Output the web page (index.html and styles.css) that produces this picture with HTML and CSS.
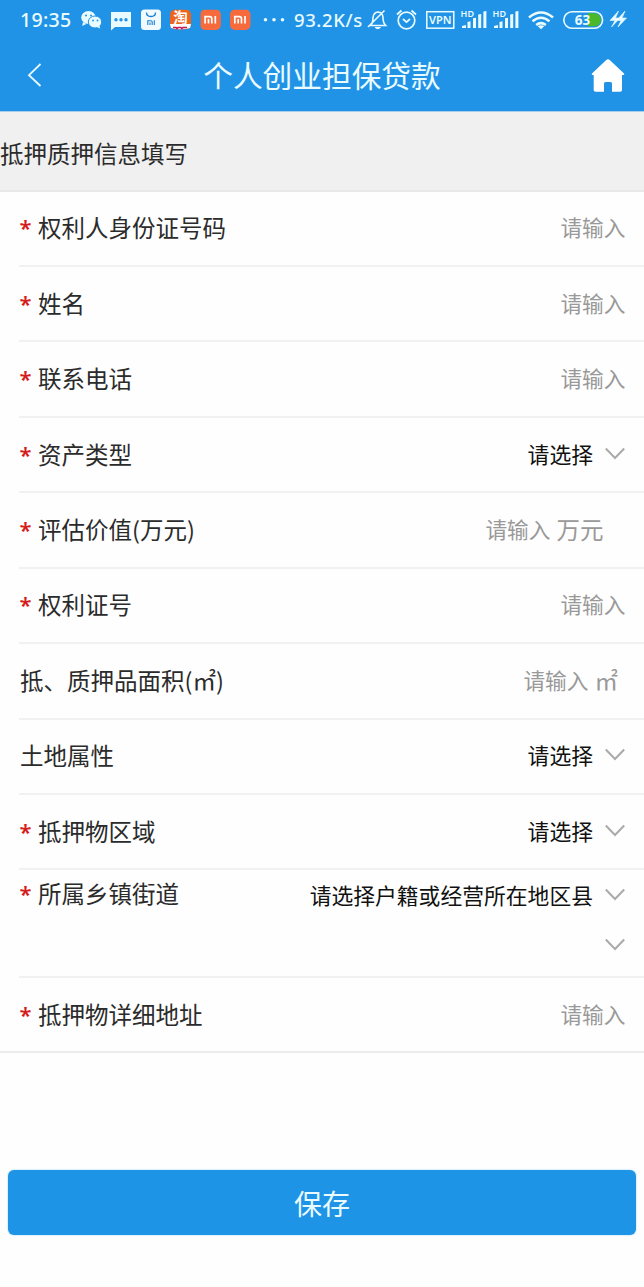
FILE: index.html
```html
<!DOCTYPE html>
<html lang="zh-CN">
<head>
<meta charset="utf-8">
<title>个人创业担保贷款</title>
<link rel="stylesheet" href="styles.css">
</head>
<body>
<svg class="defs" width="0" height="0">
  <defs>
    <symbol id="chevron" viewBox="0 0 22 14"><path d="M1.8 1.5 L11 11 L20.2 1.5" fill="none" stroke="#aaa" stroke-width="2"/></symbol>
    <symbol id="mi" viewBox="0 0 21 21"><rect width="20.5" height="20.5" rx="5" fill="#f76a3c"/><path d="M4.8 14V7.2H9.3Q11.5 7.2 11.5 9.4V14M8.2 9.6V14M15 6.6V14" fill="none" stroke="#fff" stroke-width="1.7"/></symbol>
    <symbol id="signal" viewBox="0 0 32 40"><path d="M4 28v-2l4-1v3zM9.5 28v-6l3-.8V28zM15 28V18.3l3-.6V28zM20.2 28V14.5l3-.6V28zM25.4 28V11.6l3-.6v17z" fill="#e9fbff"/><text x="2.6" y="17" class="hd">HD</text></symbol>
  </defs>
</svg>
<header class="top">
  <div class="status">
    <span class="clock">19:35</span>
    <svg width="27" height="40" viewBox="78 0 27 40"><ellipse cx="88.5" cy="17.5" rx="7.3" ry="6.5" fill="#e9fbff"/><path d="M83 22l-.8 4 4-2z" fill="#e9fbff"/><ellipse cx="95" cy="22" rx="6.7" ry="6" fill="#e9fbff" stroke="#2193e7" stroke-width="1"/><path d="M97 27l3 1.5-.5-3z" fill="#e9fbff"/><g fill="#2193e7"><circle cx="86" cy="15.5" r="1"/><circle cx="91" cy="15.5" r="1"/><circle cx="93" cy="20.5" r=".9"/><circle cx="97.5" cy="20.5" r=".9"/></g></svg>
    <svg width="31" height="40" viewBox="105 0 31 40"><path d="M111 12h20v15h-16l-4 3.5z" fill="#e9fbff"/><g fill="#2193e7"><circle cx="116" cy="19.7" r="1.7"/><circle cx="121" cy="19.7" r="1.7"/><circle cx="126" cy="19.7" r="1.7"/></g></svg>
    <svg width="30" height="40" viewBox="136 0 30 40"><rect x="141" y="9.5" width="20" height="20.5" rx="3.5" fill="#f1fbff"/><path d="M146.5 12.5q0 4 4.5 4t4.5-4" fill="none" stroke="#1680d4" stroke-width="1.3"/><path d="M147.8 25v-4.3h3q1.4 0 1.4 1.4V25M150 22.5V25M154.3 20.2V25" fill="none" stroke="#1680d4" stroke-width="1.1"/></svg>
    <svg width="30" height="40" viewBox="166 0 30 40"><rect x="170" y="9.7" width="21" height="19.6" rx="5" fill="#ee641d"/><path d="M170 24h21l-1 4q-9 2.7-19 0z" fill="#fff"/><path d="M173 27.5h3l1 1 1-1h3l1 1 1-1h4" fill="none" stroke="#c81852" stroke-width="1.6"/><text x="173.2" y="22.6" class="tao">淘</text></svg>
    <svg width="29" height="40" viewBox="196 0 29 40"><use href="#mi" x="200.3" y="9.5" width="21" height="21"/></svg>
    <svg width="31" height="40" viewBox="225 0 31 40"><use href="#mi" x="230" y="9.5" width="21" height="21"/></svg>
    <svg width="37" height="40" viewBox="256 0 37 40"><g fill="#e9fbff"><circle cx="265.5" cy="19.7" r="1.8"/><circle cx="274" cy="19.7" r="1.8"/><circle cx="282.5" cy="19.7" r="1.8"/></g></svg>
    <span class="speed">93.2K/s</span>
    <svg width="27" height="40" viewBox="365 0 27 40"><path d="M370.5 25.5q2.5-2.5 2.5-8 .6-5 5-5.5 4.7.5 5 5.5 0 5.5 2.700 8zM368 27L384.5 10.5" fill="none" stroke="#e9fbff" stroke-width="1.6"/><path d="M375 27.5h5.5q-2.7 2.5-5.5 0z" fill="#e9fbff" stroke="#e9fbff"/></svg>
    <svg width="31" height="40" viewBox="392 0 31 40"><g fill="none" stroke="#e9fbff" stroke-width="1.7"><circle cx="406.500" cy="20.500" r="8.300"/><path d="M403 19l3.500 3.200 3.500-3.200M397 14.500l4.500-4M416 14.500l-4.500-4"/></g></svg>
    <svg width="35" height="40" viewBox="423 0 35 40"><rect x="426.800" y="11.700" width="27" height="16.500" fill="none" stroke="#e9fbff" stroke-width="1.5"/><text x="429" y="24" class="vpn" textLength="22.500" lengthAdjust="spacingAndGlyphs">VPN</text></svg>
    <svg width="32" height="40"><use href="#signal" width="32" height="40"/></svg>
    <svg width="33" height="40"><use href="#signal" width="32" height="40"/></svg>
    <svg width="36" height="40" viewBox="523 0 36 40"><g fill="none" stroke="#e9fbff" stroke-width="2.500"><path d="M529 17.500q12-10 24 0M532.500 21.300q8.500-7 17 0M536.200 25q4.800-3.800 9.600 0"/></g><path d="M537.800 26.200q3.200-2 6.400 0l-3.200 3z" fill="#e9fbff"/></svg>
    <svg width="48" height="40" viewBox="559 0 48 40"><path d="M588 13.300h6.500a6.500 6.500 0 0 1 0 13H588z" fill="#4bb829"/><rect x="563.800" y="11.700" width="38.800" height="16.600" rx="8.300" fill="none" stroke="#e9fbff" stroke-width="1.600"/><text x="574.7" y="24.800" class="charge">63</text></svg>
    <svg width="37" height="40" viewBox="607 0 37 40"><path d="M618.500 11l-8.500 9.500h5l-3.500 6.500 8.500-9h-4.500zM625 11l-8.500 9.500h4.500l-3 6.500 8.500-9H622z" fill="#e9fbff" stroke="#e9fbff" stroke-width=".6"/></svg>
  </div>
  <div class="nav">
    <svg class="back" width="56" height="60" viewBox="0 0 56 60"><path d="M40.500 24L29 35.200 40.500 46" fill="none" stroke="#e9fbff" stroke-width="1.800"/></svg>
    <h1 class="title">个人创业担保贷款</h1>
    <svg class="home" width="56" height="60" viewBox="588 40 56 60"><path d="M608 59.300q1 0 2 .9l14 13.300q.8 1-.4 1.400H622v15q0 1.800-1.800 1.800H612v-8.200q0-1.500-1.500-1.500h-5q-1.500 0-1.500 1.500v8.200h-8.500q-1.800 0-1.800-1.800v-15H592.400q-1.200-.4-.4-1.400l14-13.300q1-.9 2-.9z" fill="#fff"/></svg>
  </div>
</header>
<h2 class="section">抵押质押信息填写</h2>
<main class="form">
  <div class="row"><span class="label"><i class="req">*</i>权利人身份证号码</span><span class="hint">请输入</span></div>
  <div class="row"><span class="label"><i class="req">*</i>姓名</span><span class="hint">请输入</span></div>
  <div class="row"><span class="label"><i class="req">*</i>联系电话</span><span class="hint">请输入</span></div>
  <div class="row"><span class="label"><i class="req">*</i>资产类型</span><span class="choice">请选择<svg class="chev"><use href="#chevron"/></svg></span></div>
  <div class="row"><span class="label"><i class="req">*</i>评估价值(万元)</span><span class="hint wan">请输入<span class="unit">万元</span></span></div>
  <div class="row"><span class="label"><i class="req">*</i>权利证号</span><span class="hint">请输入</span></div>
  <div class="row"><span class="label">抵、质押品面积(㎡)</span><span class="hint area">请输入<span class="unit">㎡</span></span></div>
  <div class="row"><span class="label">土地属性</span><span class="choice">请选择<svg class="chev"><use href="#chevron"/></svg></span></div>
  <div class="row"><span class="label"><i class="req">*</i>抵押物区域</span><span class="choice">请选择<svg class="chev"><use href="#chevron"/></svg></span></div>
  <div class="row tall"><span class="label"><i class="req">*</i>所属乡镇街道</span><div class="stack"><span class="choice">请选择户籍或经营所在地区县<svg class="chev"><use href="#chevron"/></svg></span><span class="choice"><svg class="chev"><use href="#chevron"/></svg></span></div></div>
  <div class="row last"><span class="label"><i class="req">*</i>抵押物详细地址</span><span class="hint">请输入</span></div>
</main>
<button class="save">保存</button>
</body>
</html>
```
FILE: styles.css
```css
* { box-sizing: border-box; }
body {
  margin: 0;
  width: 644px;
  height: 1287px;
  overflow: hidden;
  background: #fefefe;
  font-family: "Noto Sans CJK SC", sans-serif;
  color: #2b2b2b;
}
.defs { position: absolute; }
.top { height: 112px; background: #2193e7; border-bottom: 1px solid #a9cdea; }
.status { display: flex; height: 40px; color: #e9fbff; }
.status svg { flex: none; display: block; }
.clock, .speed {
  flex: none;
  font: 500 19.5px/40px "Noto Sans", sans-serif;
  white-space: nowrap;
}
.clock { width: 78px; padding-left: 20px; letter-spacing: .3px; }
.speed { width: 72px; padding-left: 1px; font-size: 18.5px; letter-spacing: .6px; }
.hd { font: 600 9px "Noto Sans", sans-serif; fill: #e9fbff; }
.tao { font: 700 14.5px "Noto Sans CJK SC", sans-serif; fill: #fff; }
.vpn { font: 600 11.5px "Noto Sans", sans-serif; fill: #e9fbff; }
.charge { font: 700 13.5px "Noto Sans", sans-serif; fill: #e9fbff; }
.nav { display: flex; justify-content: space-between; height: 60px; }
.title { margin: 5px 0 0; font-size: 29.7px; line-height: 60px; font-weight: 400; color: #e9fbff; }
.section {
  margin: 0;
  height: 79.5px;
  border-bottom: 2px solid #e9e9e9;
  background: #f0f0f0;
  font-size: 23.5px;
  line-height: 82px;
  font-weight: 400;
}
.form { border-bottom: 2px solid #ececec; }
.row {
  display: flex;
  align-items: center;
  justify-content: space-between;
  height: 75.45px;
  margin-left: 19px;
  padding: 0 18.500px 2px 0;
  border-bottom: 2px solid #f1f1f1;
}
.label { display: flex; align-items: center; font-size: 23.5px; line-height: 36px; padding-left: 1px; }
.req { width: 18.5px; margin-left: -.5px; font: normal 600 22px/36px "Noto Sans", sans-serif; color: #d41c1c; }
.hint { display: flex; align-items: center; font-size: 21.7px; line-height: 36px; color: #999; }
.unit { margin-left: 6px; font-size: 23.5px; }
.wan { margin-right: 22px; }
.area { margin-right: 7.5px; }
.choice { display: flex; align-items: center; font-size: 21.8px; line-height: 36px; color: #111; }
.chev { width: 22px; height: 14px; margin: 0 -.5px 0 11px; }
.tall { height: 108px; align-items: flex-start; padding-top: 5px; }
.stack { display: flex; flex-direction: column; align-items: flex-end; gap: 14px; padding-top: 2px; }
.stack .choice { height: 36px; }
.last { height: 73px; border-bottom: 0; }
.save {
  display: block;
  width: 628px;
  height: 65px;
  margin: 117px 0 0 8px;
  padding: 0;
  border: 0;
  border-radius: 6px;
  box-shadow: 0 0 2px #8fd0f5;
  background: #1e94e7;
  color: #e9fbff;
  font: 400 28px/67px "Noto Sans CJK SC", sans-serif;
}
```
